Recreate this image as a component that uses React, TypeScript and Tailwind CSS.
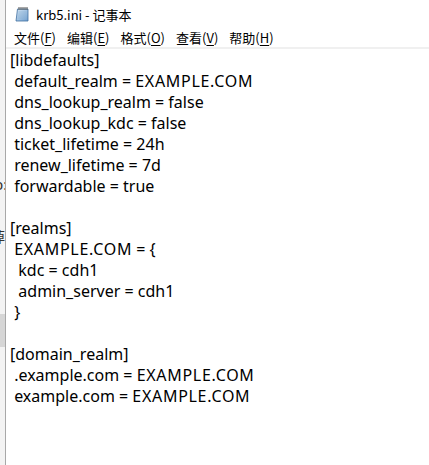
const lines = [
  "[libdefaults]",
  " default_realm = EXAMPLE.COM",
  " dns_lookup_realm = false",
  " dns_lookup_kdc = false",
  " ticket_lifetime = 24h",
  " renew_lifetime = 7d",
  " forwardable = true",
  "",
  "[realms]",
  " EXAMPLE.COM = {",
  "  kdc = cdh1",
  "  admin_server = cdh1",
  " }",
  "",
  "[domain_realm]",
  " .example.com = EXAMPLE.COM",
  " example.com = EXAMPLE.COM",
];

const menus = [
  { label: "文件", key: "F" },
  { label: "编辑", key: "E" },
  { label: "格式", key: "O" },
  { label: "查看", key: "V" },
  { label: "帮助", key: "H" },
];

function NotepadIcon() {
  return (
    <svg width="15" height="16" viewBox="0 0 15 16" aria-hidden>
      <defs>
        <linearGradient id="pad" x1="0" y1="0" x2="1" y2="1">
          <stop offset="0" stopColor="#d7e8f6" />
          <stop offset="1" stopColor="#6f9fcf" />
        </linearGradient>
      </defs>
      <path d="M2.5 3 L13 3 L13 15 L1 15 Z" fill="url(#pad)" stroke="#3f6f9f" strokeWidth="0.8" />
      <path d="M3.5 6 H11.5 M3.2 8 H11.5 M2.8 10 H11.5 M2.5 12 H11.5" stroke="#8fb2d4" strokeWidth="0.6" />
      {[4, 6, 8, 10, 12].map((x) => (
        <rect key={x} x={x - 0.5} y="1" width="1" height="3" fill="#555" />
      ))}
    </svg>
  );
}

// caps in the source font run a bit wider than Noto Sans
function Line({ text }: { text: string }) {
  const parts = text.split(/(EXAMPLE\.COM)/);
  return (
    <div className="h-[21px] whitespace-pre">
      {parts.map((p, i) =>
        p === "EXAMPLE.COM" ? (
          <span key={i} className="tracking-[0.7px]">
            {p}
          </span>
        ) : (
          p
        ),
      )}
    </div>
  );
}

export default function App() {
  return (
    <div className="flex h-[465px] w-[429px] overflow-hidden bg-white">
      <div className="relative w-[5px] shrink-0 overflow-hidden bg-[#f3f3f3]">
        <div className="absolute left-0 top-[314px] h-[33px] w-[5px] bg-[#d6d6d6]" />
        <span className="absolute left-[-6px] top-[177px] text-[15px] leading-none text-[#333] [font-family:'Noto_Sans',sans-serif]">b:</span>
        <span className="absolute left-[-9px] top-[229px] text-[14px] leading-none text-[#333] [font-family:'Noto_Sans_CJK_SC',sans-serif]">掉</span>
      </div>
      <div className="w-px shrink-0 bg-[#a8a8a8]" />
      <div className="flex min-w-0 flex-1 flex-col">
        <div className="flex h-[28px] items-center gap-[6px] pl-[9px] text-[13px] text-black [font-family:'Noto_Sans_CJK_SC',sans-serif]">
          <NotepadIcon />
          <span className="mt-[1px]">krb5.ini - 记事本</span>
        </div>
        <div className="flex h-[19px] items-center gap-[7px] pl-[6px] text-[13px] text-black [font-family:'Noto_Sans_CJK_SC',sans-serif]">
          {menus.map((m) => (
            <span key={m.key} className="px-[2px]">
              {m.label}(<span className="underline underline-offset-2">{m.key}</span>)
            </span>
          ))}
        </div>
        <div className="h-[2px] bg-[#f0f0f0]" />
        <div className="flex-1 pl-[4px] pt-[1px] text-[16px] leading-[21px] text-black [font-family:'Noto_Sans',sans-serif]">
          {lines.map((l, i) => (
            <Line key={i} text={l} />
          ))}
        </div>
      </div>
    </div>
  );
}
